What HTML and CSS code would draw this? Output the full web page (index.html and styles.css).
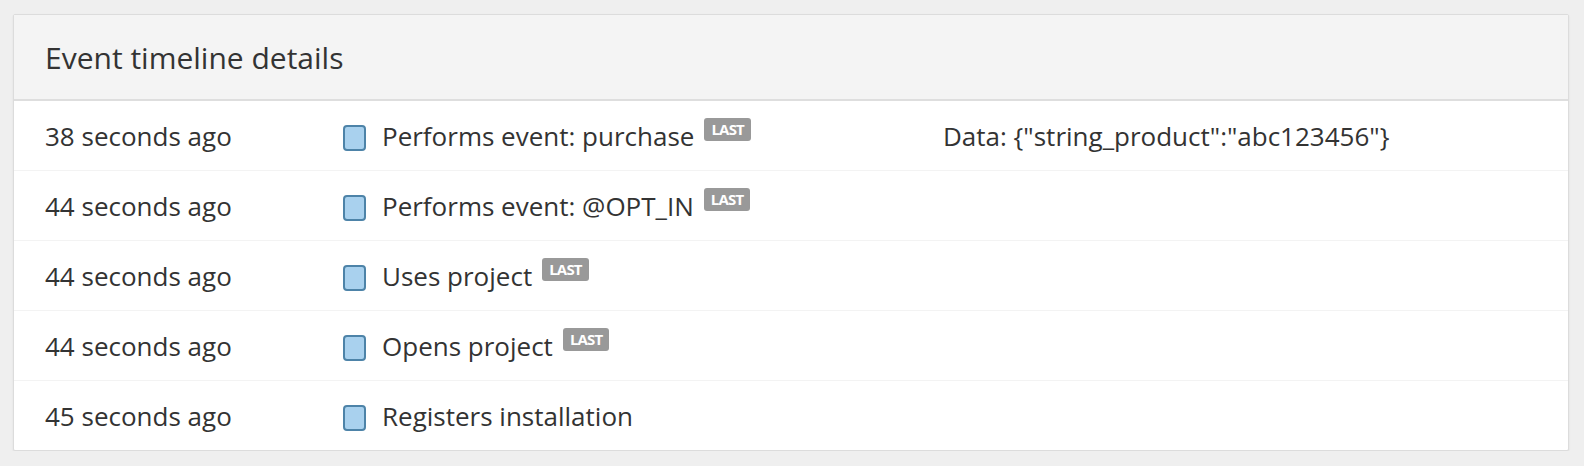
FILE: index.html
```html
<!DOCTYPE html>
<html lang="en">
<head>
    <meta charset="UTF-8">
    <meta name="viewport" content="width=device-width, initial-scale=1.0">
    <title>Event timeline details</title>
    <link rel="stylesheet" href="styles.css">
</head>
<body>
    <div class="panel">
        <div class="panel-heading">Event timeline details</div>
        <div class="timeline">
            <div class="row">
                <div class="when">38 seconds ago</div>
                <div class="what"><span class="box"></span>Performs event: purchase <span class="badge">LAST</span></div>
                <div class="data">Data: {"string_product":"abc123456"}</div>
            </div>
            <div class="row">
                <div class="when">44 seconds ago</div>
                <div class="what"><span class="box"></span>Performs event: @OPT_IN <span class="badge">LAST</span></div>
                <div class="data"></div>
            </div>
            <div class="row">
                <div class="when">44 seconds ago</div>
                <div class="what"><span class="box"></span>Uses project <span class="badge">LAST</span></div>
                <div class="data"></div>
            </div>
            <div class="row">
                <div class="when">44 seconds ago</div>
                <div class="what"><span class="box"></span>Opens project <span class="badge">LAST</span></div>
                <div class="data"></div>
            </div>
            <div class="row">
                <div class="when">45 seconds ago</div>
                <div class="what"><span class="box"></span>Registers installation</div>
                <div class="data"></div>
            </div>
        </div>
    </div>
</body>
</html>
```

FILE: styles.css
```css
body {
    margin: 0;
    padding: 14px 15px 0 13px;
    background-color: #efefef;
    font-family: "Open Sans", sans-serif;
    color: #333;
}
.panel {
    background-color: #fff;
    border: 1px solid #dcdcdc;
    border-radius: 2px;
    box-shadow: 0 1px 2px rgba(0, 0, 0, 0.08);
}
.panel-heading {
    height: 84px;
    display: flex;
    align-items: center;
    padding: 0 31px;
    background-color: #f4f4f4;
    border-bottom: 2px solid #dedede;
    font-size: 30px;
}
.row {
    display: grid;
    grid-template-columns: 294px 604px 1fr;
    align-items: center;
    height: 69px;
    padding: 0 31px;
    font-size: 26px;
    border-top: 1px solid #f3f3f3;
}
.row:first-child {
    border-top: none;
}
.what {
    display: flex;
    align-items: center;
}
.box {
    display: inline-block;
    width: 19px;
    height: 22px;
    margin: 4px 16px 0 4px;
    background-color: #a9d1ee;
    border: 2px solid #4d83a8;
    border-radius: 4px;
}
.badge {
    display: inline-block;
    margin: -12px 0 0 10px;
    padding: 0 7px;
    height: 23px;
    line-height: 23px;
    background-color: #999;
    color: #fff;
    font-size: 15px;
    font-weight: bold;
    letter-spacing: -0.8px;
    border-radius: 3px;
}
```
